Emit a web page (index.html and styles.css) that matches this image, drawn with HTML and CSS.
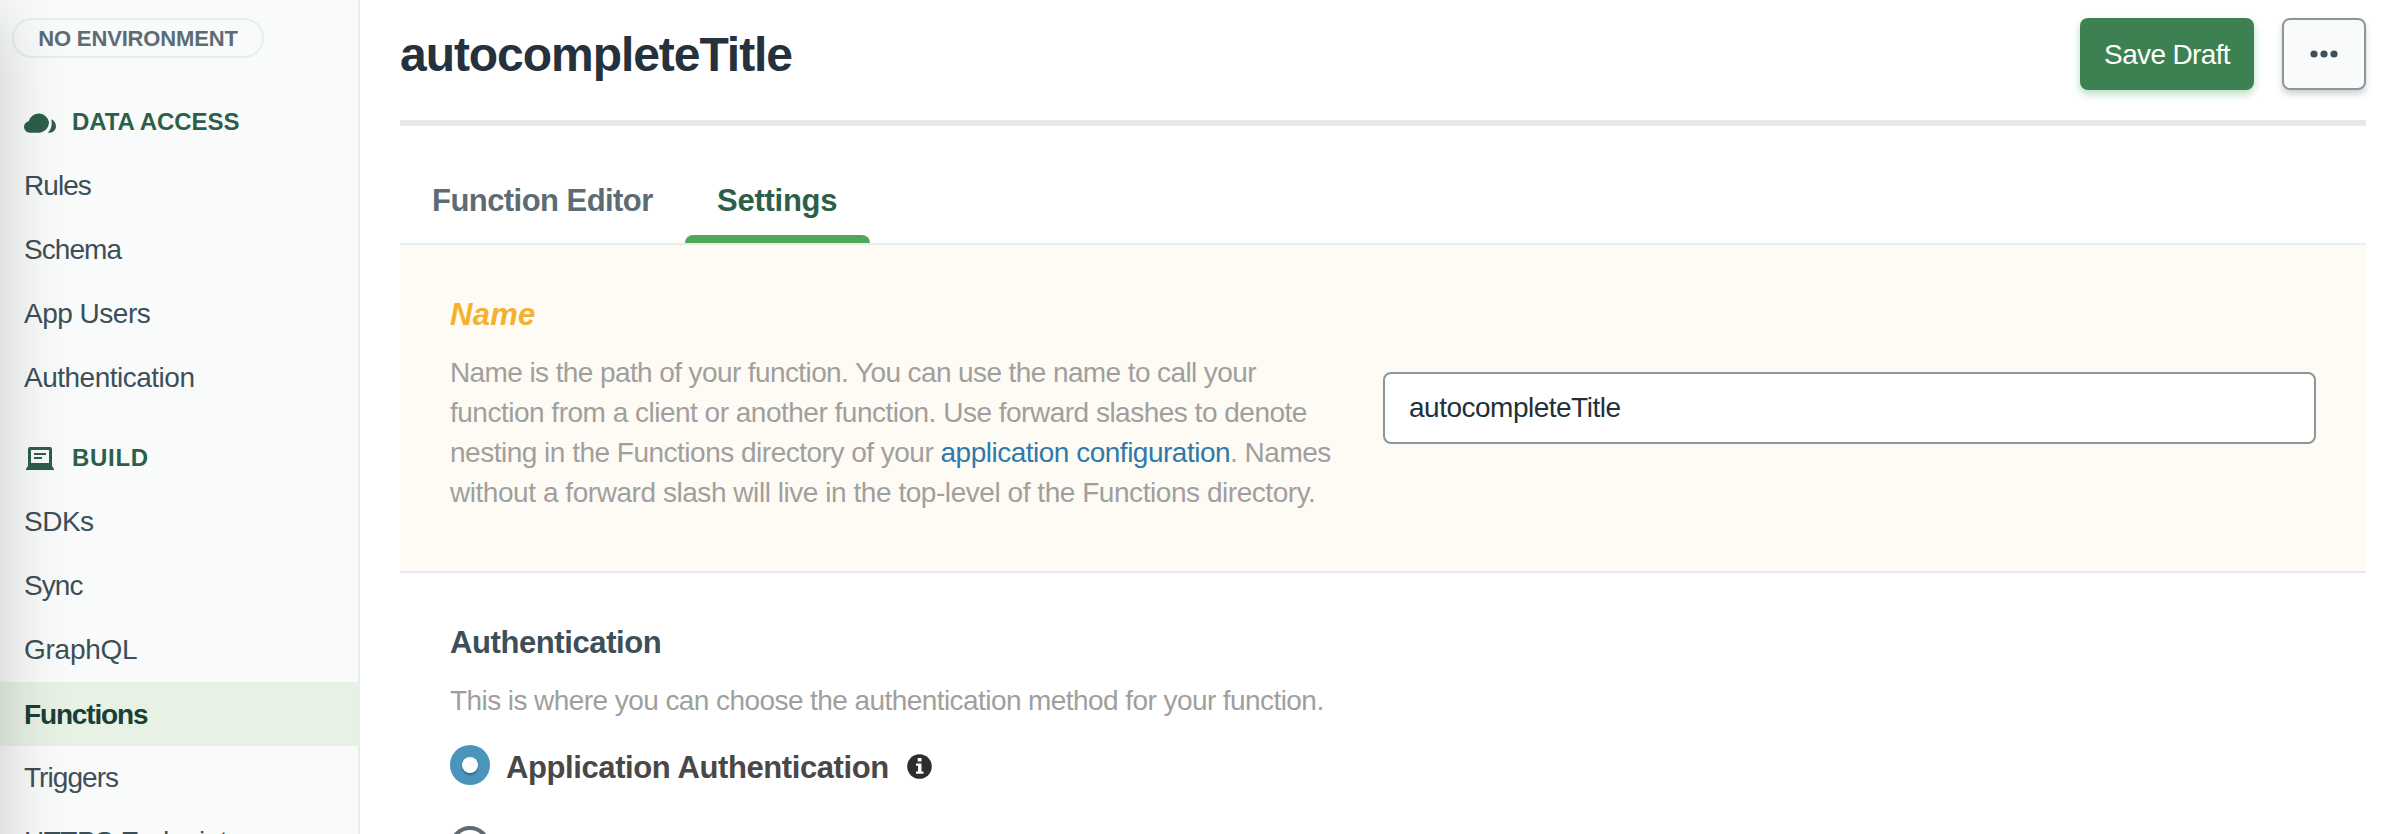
FILE: index.html
```html
<!DOCTYPE html>
<html lang="en">
<head>
<meta charset="utf-8">
<title>autocompleteTitle</title>
<link rel="stylesheet" href="styles.css">
</head>
<body>
<div class="app">
  <aside class="sidebar">
    <div class="env">NO ENVIRONMENT</div>
    <h2 class="group group-first">
      <svg class="group-icon" width="32" height="24" viewBox="0 0 32 24"><path d="M5.700 22.700A5.700 5.700 0 0 1 0 17c0-3 2-5.300 4.700-5.800A10.400 10.400 0 0 1 25 12.300c0 5.700-4.600 10.400-10.300 10.400Z"/><path d="M27.200 9.200C30 10.300 32 13 32 16.200c0 3.600-3 6.500-6.500 6.500H23.800c3.400-3.200 4.700-8.500 3.400-13.500Z"/></svg>
      <span class="t-data">DATA ACCESS</span>
    </h2>
    <a class="item tight">Rules</a>
    <a class="item tight">Schema</a>
    <a class="item">App Users</a>
    <a class="item">Authentication</a>
    <h2 class="group">
      <svg class="group-icon" width="32" height="24" viewBox="0 0 32 24"><path fill-rule="evenodd" d="M6 1h20a2 2 0 0 1 2 2V20l2 3v1H2v-1l2-3V3a2 2 0 0 1 2-2ZM7 4V17H25V4ZM10 7H22v2H10ZM10 11H18v2H10Z"/></svg>
      <span class="t-build">BUILD</span>
    </h2>
    <a class="item">SDKs</a>
    <a class="item tight">Sync</a>
    <a class="item wide">GraphQL</a>
    <a class="item active">Functions</a>
    <a class="item tight">Triggers</a>
    <a class="item">HTTPS Endpoints</a>
    <div class="edge-shadow"></div>
  </aside>
  <main class="main">
    <header class="header">
      <h1 class="title">autocompleteTitle</h1>
      <div class="actions">
        <button class="save">Save Draft</button>
        <button class="more" aria-label="More"><svg width="28" height="8" viewBox="0 0 28 8"><circle cx="4" cy="4" r="3.600"/><circle cx="14" cy="4" r="3.600"/><circle cx="24" cy="4" r="3.600"/></svg></button>
      </div>
    </header>
    <nav class="tabs">
      <a class="tab">Function Editor</a>
      <a class="tab current">Settings</a>
    </nav>
    <section class="row changed">
      <div class="info">
        <h3 class="label">Name</h3>
        <p class="desc"><span class="line">Name is the path of your function. You can use the name to call your</span> <span class="line line-2">function from a client or another function. Use forward slashes to denote</span> <span class="line line-3">nesting in the Functions directory of your <a class="link">application configuration</a>. Names</span> <span class="line line-4">without a forward slash will live in the top-level of the Functions directory.</span></p>
      </div>
      <input class="field" value="autocompleteTitle">
    </section>
    <section class="row">
      <div class="info">
        <h3 class="label">Authentication</h3>
        <p class="desc desc-auth">This is where you can choose the authentication method for your function.</p>
        <div class="option">
          <span class="radio checked"></span>
          <span class="option-label">Application Authentication</span>
          <svg class="info-icon" width="25" height="25" viewBox="0 0 25 25"><circle cx="12.500" cy="12.500" r="12.300" fill="#2d2d2d"/><path fill="#fff" d="M10.700 4h3.800v3.400h-3.800ZM9 9.500h5.500v8H16.500v2.300H9v-2.300h2v-5.700H9Z"/></svg>
        </div>
        <div class="option"><span class="radio"></span></div>
      </div>
    </section>
  </main>
</div>
</body>
</html>
```
FILE: styles.css
```css
* { box-sizing: border-box; }
body { margin: 0; font-family: "Liberation Sans", Arial, sans-serif; background: #fff; }
h1, h2, h3, p { margin: 0; }
.app { display: flex; height: 834px; overflow: hidden; }
.sidebar {
  position: relative; overflow: hidden; flex: none; width: 360px;
  padding-top: 18px; background: #f9fbfa; border-right: 2px solid #e7eeec;
}
.edge-shadow {
  position: absolute; left: -100px; top: 20px; width: 100px; height: 1000px;
  box-shadow: 0 0 70px rgba(0, 0, 0, .2); pointer-events: none;
}
.env {
  width: 252px; height: 40px; margin-left: 12px; border: 2px solid #e7eeec; border-radius: 20px;
  color: #5d6c74; font-size: 22px; font-weight: 700; line-height: 37px; text-align: center; letter-spacing: -.15px;
}
.group {
  display: flex; align-items: center; gap: 16px; height: 64px; margin-top: 16px; padding-left: 24px;
  color: #2c5f49; font-size: 24px; font-weight: 700;
}
.group-first { margin-top: 32px; }
.group-icon { fill: #2c5f49; }
.t-data { letter-spacing: -.05px; }
.t-build { letter-spacing: .7px; }
.item {
  display: block; height: 64px; padding-left: 24px; color: #3d4f58;
  font-size: 28px; line-height: 63px; letter-spacing: -.5px; white-space: nowrap;
}
.tight { letter-spacing: -.95px; }
.wide { letter-spacing: -.25px; }
.active { background: #e7f2e5; color: #1c3e38; font-weight: 700; line-height: 65px; letter-spacing: -1.15px; }
.main { width: 1966px; margin-left: 40px; }
.header {
  display: flex; justify-content: space-between; height: 126px; padding-top: 18px;
  border-bottom: 6px solid #e9e9eb;
}
.title { color: #25313c; font-size: 48px; line-height: 74px; letter-spacing: -1.05px; }
.actions { display: flex; gap: 28px; height: 72px; }
.save, .more { padding: 0; border-radius: 8px; }
.save {
  width: 174px; border: 0; background: #3d8051; color: #fff;
  font: 28px/74px "Liberation Sans", Arial, sans-serif; letter-spacing: -.65px;
  box-shadow: 0 4px 8px #b5dfc0;
}
.more {
  display: flex; align-items: center; justify-content: center; width: 84px; border: 2px solid #89979b;
  padding-bottom: 1px; background: #f9fbfa; fill: #3d4f58; box-shadow: 0 4px 6px rgba(6, 22, 33, .2);
}
.tabs { display: flex; height: 119px; padding-top: 54px; border-bottom: 2px solid #e7eeec; }
.tab {
  height: 63px; padding: 0 32px; color: #5d6c74; font-size: 31px; font-weight: 700;
  line-height: 42px; letter-spacing: -.55px; white-space: nowrap;
}
.tab:first-child { width: 285px; }
.current {
  position: relative; width: 185px; color: #2c5f49; letter-spacing: -.25px;
}
.current::after {
  content: ""; position: absolute; left: 0; right: 0; bottom: 0; height: 8px;
  border-radius: 8px 8px 0 0; background: #4fa75b;
}
.row {
  display: flex; align-items: center; justify-content: space-between;
  padding: 50px 50px 58px; border-bottom: 2px solid #e8e8ec;
}
.changed { background: #fefbf4; }
.label { color: #3d4f58; font-size: 31px; line-height: 40px; letter-spacing: -.4px; }
.changed .label { color: #f2b230; font-style: italic; letter-spacing: .3px; }
.desc {
  margin-top: 18px; color: #a09f9d; font-size: 28px; line-height: 40px;
  letter-spacing: -.6px; white-space: nowrap;
}
.line { display: block; }
.line-2 { letter-spacing: -.5px; }
.line-3 { letter-spacing: -.5px; }
.line-4 { letter-spacing: -.45px; }
.desc-auth { letter-spacing: -.57px; }
.link { color: #3079ab; }
.field {
  width: 933px; height: 72px; margin-top: 8px; padding: 0 24px; border: 2px solid #89979b; border-radius: 8px;
  background: #fff; color: #21313c; font: 28px "Liberation Sans", Arial, sans-serif; letter-spacing: -.5px;
}
.option { display: flex; align-items: center; height: 40px; margin-top: 24px; }
.option + .option { margin-top: 41px; }
.radio { width: 40px; height: 40px; border: 4px solid #5d6c74; border-radius: 50%; }
.checked { display: flex; align-items: center; justify-content: center; border: 0; background: #4b95ba; }
.checked::after {
  content: ""; width: 16px; height: 16px; border-radius: 50%; background: #fff;
  box-shadow: 0 2px 2px rgba(0, 0, 0, .3);
}
.option-label {
  margin-left: 16px; padding-top: 5px; color: #494747; font-size: 31px; font-weight: 700; letter-spacing: -.4px;
}
.info-icon { margin-left: 18px; margin-top: 3px; }
```
